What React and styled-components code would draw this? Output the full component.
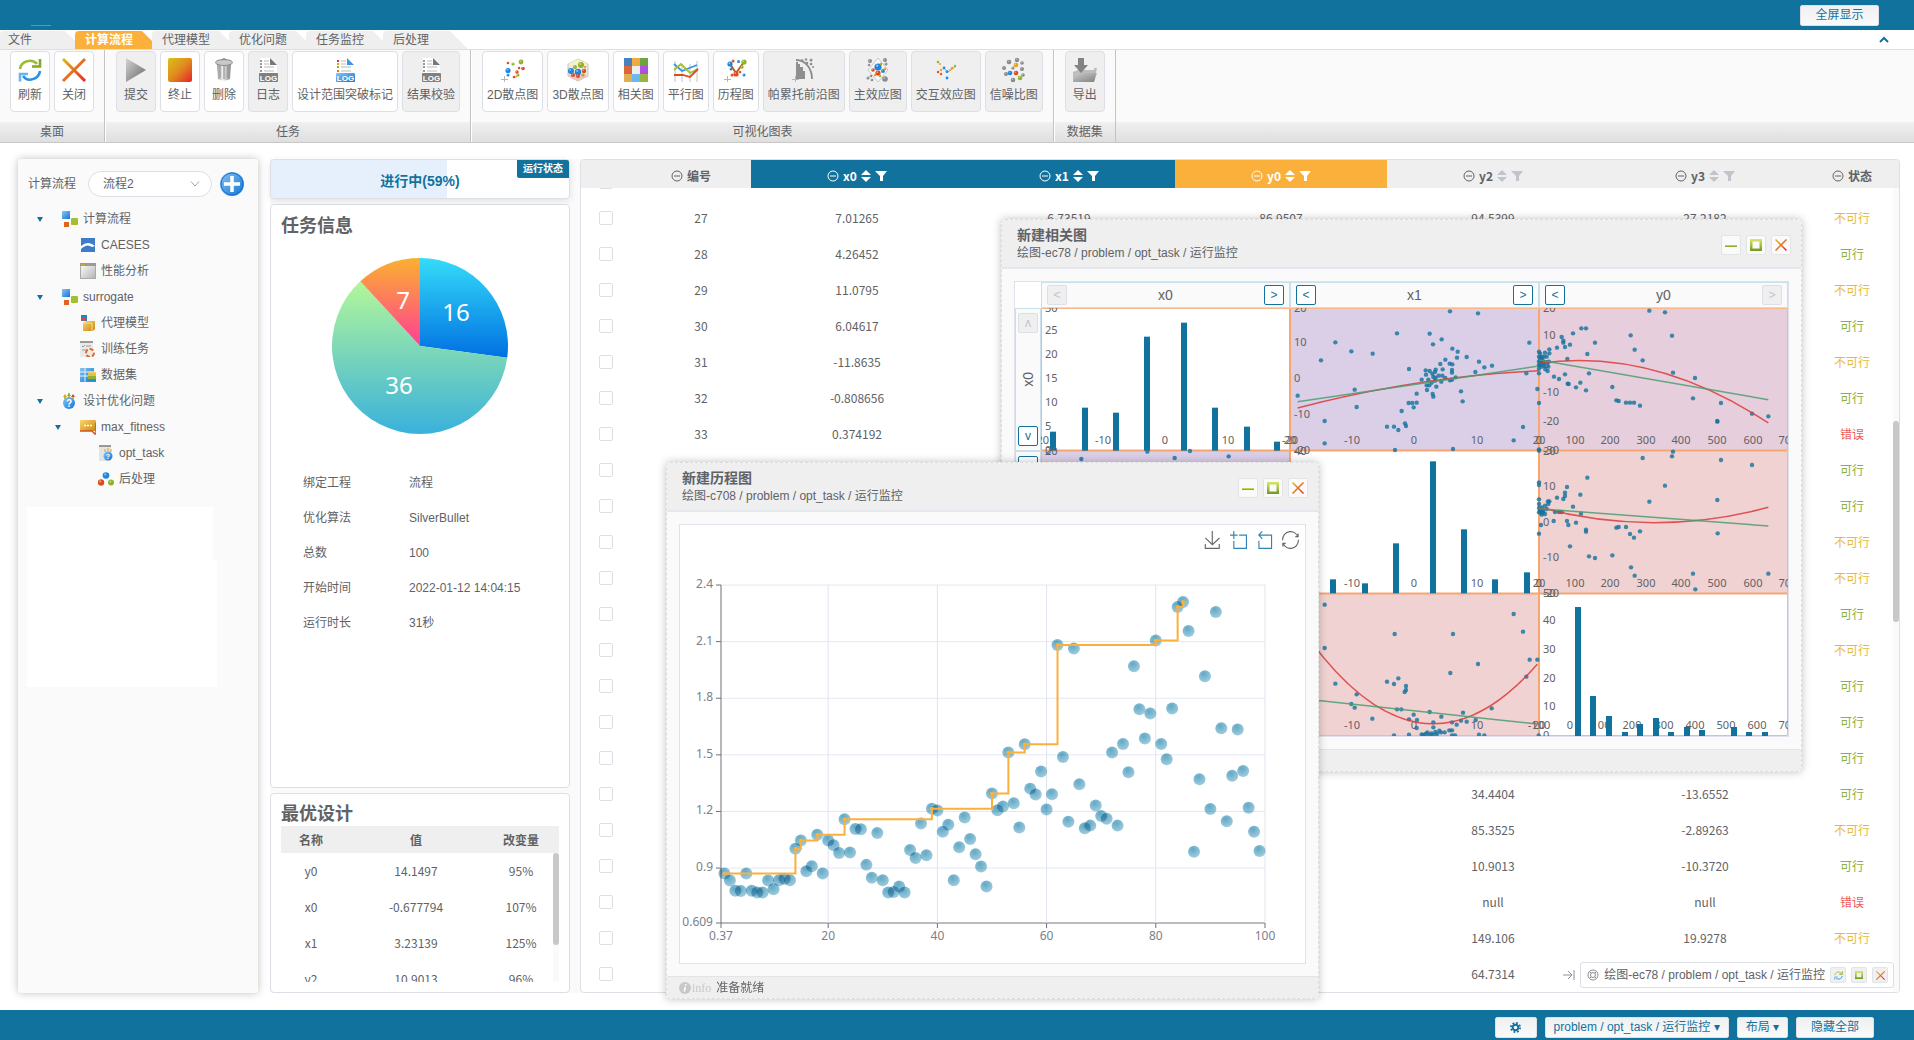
import React from "react";
import styled, { createGlobalStyle } from "styled-components";

const blue = "#12729e";
const orange = "#fbb03b";

const GlobalStyle = createGlobalStyle`
  * {
    box-sizing: border-box;
  }
  body {
    margin: 0;
    background: #fff;
    color: #606266;
    font-family: "Liberation Sans", "Noto Sans CJK SC", sans-serif;
    font-size: 12px;
    line-height: 18px;
  }
  button, select, input {
    font: inherit;
    color: inherit;
    margin: 0;
    padding: 0;
  }
  svg {
    display: block;
    flex: none;
  }
`;

/* ---------- page frame ---------- */

const Page = styled.div`
  height: 100vh;
  display: flex;
  flex-direction: column;
  position: relative;
  overflow: hidden;
`;

const TopBar = styled.header`
  flex: none;
  height: 30px;
  padding: 0 35px 0 31px;
  background: ${blue};
  display: flex;
  justify-content: space-between;
  align-items: center;
`;

const LogoMark = styled.div`
  width: 20px;
  height: 1px;
  align-self: flex-end;
  margin-bottom: 4px;
  background: #10b4dd;
`;

const BarButton = styled.button`
  height: 21px;
  min-width: ${(props) => props.$min || 42}px;
  padding: 0 8px;
  border: 1px solid #dcdfe6;
  border-radius: 2px;
  background: linear-gradient(#f0f0f0, #fafafa);
  color: ${blue};
  display: flex;
  align-items: center;
  justify-content: center;
  gap: 2px;
  white-space: nowrap;
`;

const BottomBar = styled.footer`
  flex: none;
  height: 30px;
  padding: 4px 40px 0 0;
  background: ${blue};
  display: flex;
  justify-content: flex-end;
  align-items: center;
  gap: 8px;
`;

/* ---------- ribbon ---------- */

const TabRow = styled.nav`
  flex: none;
  height: 20px;
  padding-top: 1px;
  border-bottom: 1px solid #dcdfe6;
  display: flex;
  justify-content: space-between;
`;

const TabList = styled.div`
  display: flex;
`;

const Tab = styled.button`
  width: 85px;
  margin-right: -8px;
  height: 18px;
  padding-left: 10px;
  border: 0;
  border-radius: 4px 0 0 0;
  text-align: left;
  line-height: 18px;
  background: ${(props) => (props.$active ? orange : "#efefef")};
  color: ${(props) => (props.$active ? "#fff" : "#606266")};
  font-weight: ${(props) => (props.$active ? "bold" : "normal")};
  clip-path: polygon(0 0, calc(100% - 18px) 0, 100% 100%, 0 100%);

  &:first-child {
    width: 83px;
    padding-left: 8px;
  }
`;

const FoldButton = styled.button`
  border: 0;
  background: none;
  margin-right: 24px;
`;

const Ribbon = styled.div`
  flex: none;
  display: flex;
  background: linear-gradient(#fafafa 72px, #f0f0f0 72px, #dfdfdf);
  border-bottom: 1px solid #c8c8c8;
`;

const RibbonGroup = styled.section`
  border-left: ${(props) => (props.$first ? 0 : "1px solid #fff")};
  border-right: 1px solid #c3c3c3;
`;

const RibbonButtons = styled.div`
  height: 72px;
  padding: 1px 10px 0;
  display: flex;
  gap: 4px;
`;

const RibbonButton = styled.button`
  height: 61px;
  min-width: 40px;
  padding: 6px 4px 0;
  border: 1px solid #dcdfe6;
  border-radius: 4px;
  background: ${(props) => (props.disabled ? "#efefef" : "#fff")};
  color: #606266;
  display: flex;
  flex-direction: column;
  align-items: center;
  gap: 4px;
  white-space: nowrap;
`;

const RibbonTitle = styled.div`
  height: 20px;
  line-height: 20px;
  text-align: center;
`;

/* ---------- main area ---------- */

const Main = styled.main`
  flex: 1;
  min-height: 0;
  padding: 16px 14px 17px 18px;
  display: flex;
  gap: 12px;
`;

const Side = styled.aside`
  width: 240px;
  flex: none;
  background: #fafafa;
  border-radius: 3px;
  box-shadow: 0 0 8px rgba(0, 0, 0, 0.25);
`;

const FlowPicker = styled.div`
  display: flex;
  align-items: center;
  padding: 12px 14px 0 10px;
`;

const SelectWrap = styled.div`
  position: relative;
  margin: 0 8px 0 12px;

  svg {
    position: absolute;
    right: 12px;
    top: 9px;
    pointer-events: none;
  }
`;

const Select = styled.select`
  appearance: none;
  width: 124px;
  height: 26px;
  padding: 0 14px;
  border: 1px solid #dcdfe6;
  border-radius: 13px;
  background: #fff;
`;

const PlainButton = styled.button`
  border: 0;
  background: none;
  cursor: pointer;
`;

const Tree = styled.ul`
  list-style: none;
  margin: 9px 0 15px;
  padding: 0;
`;

const TreeRow = styled.li`
  height: 26px;
  padding-left: ${(props) => 19 + props.$level * 18}px;
  display: flex;
  align-items: center;
`;

const Caret = styled.span`
  width: 25px;
  flex: none;

  &::before {
    content: "";
    display: ${(props) => (props.$open ? "block" : "none")};
    width: 0;
    border: 3px solid transparent;
    border-top: 5px solid ${blue};
    border-bottom: 0;
  }
`;

const TreeLabel = styled.span`
  margin-left: 5px;
`;

const BlankBlock = styled.div`
  width: ${(props) => props.$w}px;
  height: ${(props) => props.$h}px;
  margin-left: 9px;
  background: #fff;
`;

const Work = styled.div`
  flex: 1;
  min-width: 0;
  background: #fafafa;
  display: flex;
  gap: 10px;
`;

const Middle = styled.div`
  width: 300px;
  flex: none;
  display: flex;
  flex-direction: column;
  gap: 5px;
`;

const Card = styled.section`
  background: #fff;
  border: 1px solid #dcdfe6;
  border-radius: 4px;
`;

const Progress = styled(Card)`
  position: relative;
  height: 40px;
  padding-top: 4px;
  display: flex;
  align-items: center;
  justify-content: center;
  color: ${blue};
  font-size: 14px;
  font-weight: bold;
  background: linear-gradient(to right, #e6f0fc 59%, #fff 59%);
  box-shadow: 0 2px 6px rgba(0, 0, 0, 0.1);
`;

const Badge = styled.span`
  position: absolute;
  top: 0;
  right: 0;
  padding: 0 6px;
  border-radius: 0 2px 0 2px;
  background: ${blue};
  color: #fff;
  font-size: 10px;
`;

const InfoCard = styled(Card)`
  flex: 1;
  padding: 9px 10px;
`;

const CardTitle = styled.h2`
  margin: 0;
  font-size: 18px;
  line-height: 24px;
`;

const PieBox = styled.div`
  display: flex;
  justify-content: center;
  padding: 20px 0 32px;
`;

const InfoList = styled.dl`
  margin: 0;
  padding-left: 22px;
  display: grid;
  grid-template-columns: 106px 1fr;
  line-height: 35px;

  dd {
    margin: 0;
  }
`;

const BestCard = styled(Card)`
  height: 200px;
  padding: 8px 10px 10px;
  display: flex;
  flex-direction: column;
`;

const Scroller = styled.div`
  position: relative;
  flex: 1;
  min-height: 0;
  overflow: hidden;
`;

const Track = styled.div`
  position: absolute;
  right: 0;
  top: ${(props) => props.$top}px;
  bottom: 0;
  width: 6px;
  background: #fafafa;

  &::after {
    content: "";
    position: absolute;
    top: ${(props) => props.$from}%;
    height: ${(props) => props.$size}%;
    width: 6px;
    border-radius: 3px;
    background: #c8c8c8;
  }
`;

const Table = styled.table`
  width: 100%;
  table-layout: fixed;
  border-collapse: collapse;
  text-align: center;
  font-family: "Noto Sans CJK SC", sans-serif;

  td, th {
    padding: 0;
  }
  tbody tr {
    height: 36px;
  }
`;

const BestTable = styled(Table)`
  thead th {
    height: 27px;
    background: #efefef;
  }
  td:last-child, th:last-child {
    padding-right: 8px;
  }
`;

const DataCard = styled(Card)`
  flex: 1;
  min-width: 0;
  display: flex;
  overflow: hidden;
`;

const DataScroll = styled.div`
  flex: 1;
  overflow-x: hidden;
  overflow-y: scroll;
  scrollbar-width: none;
`;

const HeadCell = styled.th`
  position: sticky;
  top: 0;
  z-index: 1;
  height: 28px;
  background: ${(props) => props.$bg || "#efefef"};
  color: ${(props) => (props.$bg ? "#fff" : "#606266")};
`;

const HeadInner = styled.div`
  display: flex;
  align-items: center;
  justify-content: center;
  gap: 4px;
  padding-top: 4px;
  padding-right: ${(props) => props.$shift || 0}px;
`;

const CheckCell = styled.td`
  text-align: left;
`;

const Check = styled.input.attrs({ type: "checkbox" })`
  appearance: none;
  display: block;
  width: 14px;
  height: 14px;
  margin-left: 18px;
  border: 1px solid #dcdfe6;
  border-radius: 2px;
  background: #fff;
`;

const stateColors = { 可行: "#8cb043", 不可行: "#e6bb3c", 错误: "#ee5a5a" };

const StateCell = styled.td`
  color: ${(props) => stateColors[props.$state]};
  padding-right: 6px !important;
`;

/* ---------- floating windows ---------- */

const WindowBox = styled.section`
  position: absolute;
  left: ${(props) => props.$x}px;
  top: ${(props) => props.$y}px;
  z-index: ${(props) => props.$z};
  border: 1px dashed #dcdcdc;
  border-radius: 4px;
  background: #fafafa;
  box-shadow: 0 0 8px rgba(0, 0, 0, 0.25);
`;

const WindowHead = styled.header`
  padding: 6px 10px 5px 15px;
  background: #efefef;
  border-bottom: 2px solid #e4e7ed;
  display: flex;
  justify-content: space-between;
`;

const WindowTitle = styled.h3`
  margin: 0;
  font-size: 14px;
  line-height: 18px;
`;

const WindowTools = styled.div`
  display: flex;
  gap: 5px;
  padding-top: 9px;
`;

const ToolButton = styled.button`
  width: ${(props) => props.$size || 20}px;
  height: ${(props) => props.$size || 20}px;
  border: 1px solid #e2e4ea;
  border-radius: 2px;
  background: ${(props) => (props.$size ? "#f0f0f0" : "#fafafa")};
  display: flex;
  align-items: center;
  justify-content: center;
`;

const WindowBody = styled.div`
  margin: 12px;
  border: 1px solid #dfe2ea;
  background: #fff;
  position: relative;
`;

const WindowFoot = styled.footer`
  height: 22px;
  padding-left: 12px;
  border-top: 1px solid #e4e4e4;
  background: #efefef;
  display: flex;
  align-items: center;
`;

const InfoWord = styled.span`
  color: #c8c8c8;
  font-family: "Liberation Serif", serif;
  margin: 0 5px 0 1px;
`;

const Matrix = styled.div`
  display: grid;
  grid-template-columns: 26px 747px;
  grid-template-rows: 26px 428px;
`;

const MatrixHead = styled.div`
  grid-column: 2;
  display: flex;
`;

const MatrixSide = styled.div`
  display: flex;
  flex-direction: column;
`;

const AxisCell = styled.div`
  flex: 1;
  display: flex;
  flex-direction: ${(props) => (props.$vertical ? "column" : "row")};
  align-items: center;
  justify-content: space-between;
  padding: ${(props) => (props.$vertical ? "4px 0" : "0 5px")};
  border: 1px solid #c9e0ea;
  background: #fafafa;
  font-size: 14px;
`;

const AxisName = styled.span`
  writing-mode: ${(props) => (props.$vertical ? "vertical-rl" : "horizontal-tb")};
  rotate: ${(props) => (props.$vertical ? "180deg" : "0deg")};
`;

const StepButton = styled.button`
  width: 20px;
  height: 20px;
  border: 1px solid ${(props) => (props.disabled ? "#dcdfe6" : blue)};
  border-radius: 2px;
  background: ${(props) => (props.disabled ? "#efefef" : "#fff")};
  color: ${(props) => (props.disabled ? "#c0c4cc" : blue)};
  font-size: 12px;
  line-height: 18px;
`;

const ChartTools = styled.div`
  position: absolute;
  right: 6px;
  top: 6px;
  display: flex;
  gap: 9px;
`;

const Dock = styled.div`
  position: absolute;
  right: 20px;
  bottom: 52px;
  display: flex;
  align-items: center;
  gap: 5px;
`;

const DockItem = styled.div`
  height: 26px;
  padding: 0 5px 0 6px;
  border: 1px solid #dcdfe6;
  border-radius: 3px;
  background: #fff;
  display: flex;
  align-items: center;
  gap: 5px;
`;

/* ---------- icons ---------- */

// 공통 그라데이션 대신 아이콘 색상은 한 곳에서 정의
const Gradients = () => (
  <svg width="0" height="0" style={{ position: "absolute" }} aria-hidden="true">
    <defs>
      <linearGradient id="gFire" x1="0" y1="0" x2="1" y2="1">
        <stop offset="0" stopColor="#d9c21a" />
        <stop offset="0.5" stopColor="#e08a1e" />
        <stop offset="1" stopColor="#e8202c" />
      </linearGradient>
      <linearGradient id="gFireLine" gradientUnits="userSpaceOnUse" x1="0" y1="0" x2="24" y2="24">
        <stop offset="0" stopColor="#d9c21a" />
        <stop offset="0.5" stopColor="#e8701e" />
        <stop offset="1" stopColor="#e8202c" />
      </linearGradient>
      <linearGradient id="gGrey" x1="0" y1="0" x2="1" y2="1">
        <stop offset="0" stopColor="#d4d4d4" />
        <stop offset="1" stopColor="#666" />
      </linearGradient>
      <linearGradient id="gBlue" x1="0" y1="0" x2="1" y2="1">
        <stop offset="0" stopColor="#8cc4f0" />
        <stop offset="1" stopColor="#0a76dc" />
      </linearGradient>
      <linearGradient id="gGreen" x1="0" y1="0" x2="0" y2="1">
        <stop offset="0" stopColor="#dbe86a" />
        <stop offset="1" stopColor="#6f9820" />
      </linearGradient>
      <linearGradient id="gGold" x1="0" y1="0" x2="1" y2="1">
        <stop offset="0" stopColor="#fbd56a" />
        <stop offset="1" stopColor="#c98812" />
      </linearGradient>
      <linearGradient id="gPaper" x1="0" y1="0" x2="1" y2="1">
        <stop offset="0" stopColor="#fff" />
        <stop offset="1" stopColor="#b4b4b4" />
      </linearGradient>
      <linearGradient id="gSteel" x1="0" y1="0" x2="1" y2="0">
        <stop offset="0" stopColor="#999" />
        <stop offset="0.4" stopColor="#eee" />
        <stop offset="1" stopColor="#888" />
      </linearGradient>
      <radialGradient id="gBall" cx="0.4" cy="0.3" r="0.9">
        <stop offset="0" stopColor="#4f9fc0" />
        <stop offset="1" stopColor="#a9d0e0" />
      </radialGradient>
    </defs>
  </svg>
);

const ball = { b: "#1f86e0", r: "#dd4a20", g: "#8fb42c", o: "#e8a020", k: "#8a8a8a", c: "#45b6d8" };

// 점 목록 [x, y, r, color]
const Dots = ({ list }) =>
  list.map(([x, y, r, c], i) => (
    <g key={i}>
      <circle cx={x} cy={y} r={r} fill={ball[c]} />
      <circle cx={x - r / 4} cy={y - r / 3} r={r / 3} fill="#fff" opacity="0.45" />
    </g>
  ));

const Corner = () => <path d="M0 21.500H7M3.500 18V24" stroke="#b5b5b5" fill="none" />;

const RefreshArt = () => (
  <g fill="none" strokeWidth="2.600">
    <path d="M2 11C3 3 14 0 19 6" stroke="#9cbc34" />
    <path d="M14 8.500H22V1" stroke="#86a822" />
    <path d="M22 13C21 21 10 25 5 18" stroke="#2a92e4" />
    <path d="M10 16H2V23.500" stroke="#6cb4ec" />
  </g>
);
const CrossArt = () => <path d="M1 1L23 23M23 1L1 23" stroke="url(#gFireLine)" strokeWidth="3" fill="none" />;

const LogArt = ({ color }) => (
  <g>
    <path d="M4 0H15L21 6V17H4Z" fill="#fff" />
    <path d="M14 0L21 7H14Z" fill={color ? "#3d97e2" : "#777"} />
    {[3, 6, 9, 13].map((y, i) => (
      <g key={y}>
        <path d={`M4 ${y}h2`} stroke={color ? ["#d33", "#e8a020", "#8fb42c", "#e8701e"][i] : "#999"} strokeWidth="2" />
        <path d={`M8 ${y}h${i < 2 ? 5 : 10}`} stroke="#b9b9b9" />
      </g>
    ))}
    <rect x="3" y="15" width="19" height="9" rx="1" fill={color ? "url(#gBlue)" : "#808080"} />
    <text x="12.500" y="22.500" fontSize="8" fontWeight="bold" fill="#fff" textAnchor="middle">LOG</text>
  </g>
);

const ribbonArt = {
  refresh: <RefreshArt />,
  close: <CrossArt />,
  play: <path d="M2 0L22 12L2 24Z" fill="url(#gGrey)" />,
  stop: <rect x="0" y="0" width="24" height="24" rx="2" fill="url(#gFire)" />,
  trash: (
    <g>
      <path d="M5 6L6 21Q12 24 18 21L19 6Z" fill="url(#gSteel)" />
      <path d="M8 8V20M12 8V21M16 8V20" stroke="#8d8d8d" />
      <ellipse cx="12" cy="4.500" rx="8.500" ry="3" fill="#c9c9c9" stroke="#8a8a8a" />
      <path d="M9 2Q12 -1 15 2" stroke="#8a8a8a" fill="none" />
    </g>
  ),
  log: <LogArt />,
  logColor: <LogArt color />,
  scatter2d: (
    <g>
      <Corner />
      <Dots list={[[7, 12.500, 2.600, "b"], [7, 17, 1.500, "b"], [7, 5, 1.300, "r"], [12, 6, 1.600, "g"], [20, 4, 2.400, "g"], [16, 14, 1.700, "r"], [22, 10.500, 1.800, "r"], [18, 10, 1.300, "r"], [13, 19, 1.300, "r"], [17, 17, 1.500, "g"], [15, 18.500, 1, "o"]]} />
    </g>
  ),
  scatter3d: (
    <g>
      <path d="M12 1L22 6V18L12 23L2 18V6Z" fill="#eceadb" stroke="#c4c4bc" />
      <path d="M2 6L12 11L22 6L12 1Z" fill="#f7efc8" />
      <path d="M2 18L12 13L22 18L12 23Z" fill="#f2c4bc" />
      <Dots list={[[5, 13, 3, "b"], [12, 14, 3.200, "b"], [15, 7, 3, "g"], [9, 9, 2, "g"], [7, 17, 2, "r"], [12, 18, 2, "r"], [18, 13, 2.200, "r"], [19, 9, 1.200, "o"], [17, 17, 1.600, "g"]]} />
    </g>
  ),
  matrix: (
    <g>
      {["#2a6db8", "#f0a020", "#5a9a24", "#d8501c", "#f2f2f2", "#a93ce0", "#e0a63c", "#5ab4f0", "#93b428"].map((c, i) => (
        <rect key={i} x={(i % 3) * 8} y={Math.floor(i / 3) * 8} width="8" height="8" fill={c} />
      ))}
      <path d="M0 0H24V24H0Z" fill="url(#gPaper)" opacity="0.150" />
    </g>
  ),
  parallel: (
    <g fill="none">
      <path d="M1 3V24M8 6V24M16 6V24M23 3V24" stroke="#c4c4c4" />
      <path d="M0 6L8 13L23 7" stroke="#3494e4" strokeWidth="1.800" />
      <path d="M0 12L7 6L16 15L24 11" stroke="#a3bf30" strokeWidth="1.800" />
      <path d="M0 17H9L16 19L24 11" stroke="#dd4a20" strokeWidth="1.800" />
    </g>
  ),
  history: (
    <g>
      <Corner />
      <path d="M6 6L12 15L20 4" stroke="#c25c18" strokeWidth="2" fill="none" />
      <Dots list={[[6, 6, 2.600, "b"], [20, 4, 2.600, "g"], [9, 3, 1.500, "r"], [14.500, 3.500, 1.500, "b"], [12, 16, 2.600, "r"], [7, 11, 1.500, "b"], [18, 9, 1.700, "g"], [20, 17, 1.500, "b"], [8, 17, 1.500, "r"], [16, 14, 1.300, "r"]]} />
    </g>
  ),
  pareto: (
    <g>
      <Corner />
      <path d="M4 21V4H6V6H8V9H11V13H13V21Z" fill="#8e8e8e" />
      <path d="M4 2C14 2 20 11 20 21" stroke="#8a8a8a" strokeWidth="1.800" fill="none" />
      <Dots list={[[10, 2.500, 1.300, "k"], [14, 1.500, 1.200, "k"], [19, 2, 1.500, "k"], [15, 5, 1.300, "k"], [19, 6, 1.300, "k"], [21, 9, 1, "k"]]} />
    </g>
  ),
  mainEffect: (
    <g>
      <path d="M12 0L22 12L12 24L2 12Z" fill="#f7f7f7" stroke="#c8c8c8" />
      <Dots list={[[4, 3, 2, "k"], [19, 2, 2, "k"], [3, 7, 1.200, "k"], [20, 6, 1.500, "k"], [2, 20, 1.500, "k"], [6, 22, 1.300, "k"], [5, 18, 1.300, "k"], [19, 21, 2.800, "k"], [12, 9, 3.600, "b"], [12, 15, 2.600, "r"], [7, 12, 1.800, "r"], [17, 13, 2, "b"], [15, 6, 1.300, "g"], [9, 17, 1.200, "o"], [14, 18, 1.200, "g"], [19, 11, 1.400, "o"]]} />
    </g>
  ),
  cross: (
    <g>
      <path d="M11 11L14 14L21 9" stroke="#aaa" fill="none" />
      <Dots list={[[4, 4, 1.300, "g"], [6, 6, 1, "o"], [4, 14, 1.200, "r"], [7, 16, 1.200, "r"], [7, 12, 1.200, "o"], [10, 10, 1.400, "b"], [13, 13.500, 1.500, "b"], [18, 10, 1.300, "o"], [21, 8, 1.200, "g"], [13, 20, 1.400, "b"], [16, 12, 1, "o"]]} />
    </g>
  ),
  noise: (
    <Dots list={[[7, 4, 2.300, "k"], [15, 2, 2.200, "k"], [2, 10, 2, "k"], [14, 7, 2.300, "o"], [20, 5, 1.800, "k"], [20, 11, 2, "k"], [4, 16, 2, "k"], [8, 15, 2.300, "b"], [14, 15, 2.300, "r"], [11, 10, 1.600, "k"], [21, 17, 1.800, "k"], [11, 22, 2.300, "k"], [18, 20, 2.300, "g"]]} />
  ),
  exportFile: (
    <g>
      <path d="M5 12H21V10H24L21 24H0V14Z" fill="#bcbcbc" />
      <path d="M2 15H24L21 24H0Z" fill="url(#gGrey)" opacity="0.700" />
      <path d="M5 0H11V7H15L8 15L1 7H5Z" fill="#838383" />
    </g>
  ),
};

const Art = ({ name }) => (
  <svg width="24" height="24" viewBox="0 0 24 24" overflow="visible" aria-hidden="true">
    {ribbonArt[name]}
  </svg>
);

const treeArt = {
  flow: (
    <g>
      <rect x="0" y="0" width="8" height="8" fill="url(#gBlue)" />
      <rect x="9" y="7" width="7" height="7" rx="1" fill="#a3bf30" />
      <rect x="2" y="11" width="5" height="5" fill="#e0661e" />
    </g>
  ),
  caeses: (
    <g>
      <rect x="1" y="1" width="14" height="14" fill="#3f7cc8" />
      <path d="M1 9Q8 3 15 9L12 10Q7 6 1 12Z" fill="#fff" />
    </g>
  ),
  panel: (
    <g>
      <rect x="0.500" y="0.500" width="15" height="15" fill="url(#gPaper)" stroke="#aaa" />
      <rect x="0" y="0" width="16" height="3" fill="#9a9a9a" />
      <path d="M1 1.500h4" stroke="#e8a020" />
    </g>
  ),
  model: (
    <g>
      <rect x="1" y="0" width="6" height="6" fill="#2b7fd0" />
      <circle cx="4" cy="4" r="2" fill="#dd4a20" />
      <path d="M3 8L6 6H15V14L13 16H3Z" fill="url(#gGold)" />
      <path d="M3 8H12V16" stroke="#f8dc92" fill="none" />
    </g>
  ),
  train: (
    <g>
      <rect x="0" y="0" width="13" height="16" fill="#e9e9e9" />
      <rect x="0" y="0" width="13" height="2" fill="#999" />
      <path d="M2 5L3 6L5 4M6 5H11M2 9H7" stroke="#999" fill="none" />
      <circle cx="10" cy="12" r="4" fill="none" stroke="#de6a30" strokeWidth="2" strokeDasharray="4 2" />
    </g>
  ),
  data: (
    <g>
      <path d="M0 1H14V15H0Z" fill="url(#gBlue)" />
      <path d="M0 5H14M0 9H9M5 1V15" stroke="#e4f1fb" />
      <ellipse cx="12" cy="6" rx="4" ry="2" fill="#f8d060" />
      <rect x="8" y="6" width="8" height="4" fill="#e2c344" />
      <rect x="8" y="9" width="8" height="3" fill="#8fb42c" />
      <rect x="8" y="12" width="8" height="3" fill="#2f8be0" />
    </g>
  ),
  problem: (
    <g>
      <circle cx="7" cy="10" r="6" fill="url(#gBlue)" />
      <text x="7" y="14" fontSize="10" fontWeight="bold" textAnchor="middle" fill="#fff">?</text>
      <path d="M3 6V2M7 5V0M11 6V2" stroke="#8fb42c" strokeWidth="1.500" />
      <path d="M1 4L3 1L5 4Z" fill="#e8a020" />
      <path d="M5 3L7 0L9 3Z" fill="#8fb42c" />
      <path d="M9 4L11 1L13 4Z" fill="#dd4a20" />
    </g>
  ),
  board: (
    <g>
      <rect x="0" y="1" width="16" height="11" rx="1" fill="url(#gGold)" />
      <path d="M0 12H12L15 15H16V4" stroke="#d8501c" strokeWidth="1.500" fill="none" />
      <path d="M4 6.500h2M7 6.500h2M10 6.500h2" stroke="#fff" strokeWidth="1.500" />
    </g>
  ),
  task: (
    <g>
      <rect x="1" y="0" width="12" height="16" fill="#e4e4e4" />
      <rect x="1" y="0" width="12" height="2" fill="#999" />
      <circle cx="10" cy="11" r="4.500" fill="url(#gBlue)" />
      <text x="10" y="14" fontSize="7" fontWeight="bold" textAnchor="middle" fill="#fff">?</text>
      <path d="M7 7V4M10 6V3M13 7V4" stroke="#e8a020" />
    </g>
  ),
  post: <Dots list={[[8, 4.500, 3.300, "b"], [3, 11.500, 3.200, "r"], [13, 11.500, 3, "g"]]} />,
};

const TreeArt = ({ name }) => (
  <svg width="16" height="16" viewBox="0 0 16 16" aria-hidden="true">
    {treeArt[name]}
  </svg>
);

const MinusArt = () => (
  <svg width="12" height="12" viewBox="0 0 12 12">
    <rect x="0" y="6" width="12" height="2" fill="url(#gGreen)" />
  </svg>
);
const SquareArt = ({ size = 12 }) => (
  <svg width={size} height={size} viewBox="0 0 12 12">
    <path d="M0 0H12V12H0ZM2.500 2.500V9.500H9.500V2.500Z" fillRule="evenodd" fill="url(#gGreen)" />
  </svg>
);
const XArt = ({ size = 12 }) => (
  <svg width={size} height={size} viewBox="0 0 24 24">
    <CrossArt />
  </svg>
);

const CircleMinus = () => (
  <svg width="12" height="12" viewBox="0 0 12 12" fill="none" stroke="currentColor">
    <circle cx="6" cy="6" r="5" />
    <path d="M3 6H9" />
  </svg>
);
const SortArt = ({ fill }) => (
  <svg width="10" height="12" viewBox="0 0 10 12" fill={fill}>
    <path d="M0 5L5 0L10 5Z" />
    <path d="M0 7L5 12L10 7Z" />
  </svg>
);
const FilterArt = ({ fill }) => (
  <svg width="12" height="12" viewBox="0 0 12 12" fill={fill}>
    <path d="M0 1H12L8 6V11H5V6Z" />
  </svg>
);

/* ---------- data ---------- */

const tabs = ["文件", "计算流程", "代理模型", "优化问题", "任务监控", "后处理"];

const ribbon = [
  { title: "桌面", items: [["refresh", "刷新"], ["close", "关闭"]] },
  {
    title: "任务",
    items: [["play", "提交", true], ["stop", "终止"], ["trash", "删除"], ["log", "日志", true], ["logColor", "设计范围突破标记"], ["log", "结果校验", true]],
  },
  {
    title: "可视化图表",
    items: [
      ["scatter2d", "2D散点图"], ["scatter3d", "3D散点图"], ["matrix", "相关图"], ["parallel", "平行图"], ["history", "历程图"],
      ["pareto", "帕累托前沿图", true], ["mainEffect", "主效应图", true], ["cross", "交互效应图", true], ["noise", "信噪比图", true],
    ],
  },
  { title: "数据集", items: [["exportFile", "导出", true]] },
];

const tree = [
  [0, "flow", "计算流程", true],
  [1, "caeses", "CAESES"],
  [1, "panel", "性能分析"],
  [0, "flow", "surrogate", true],
  [1, "model", "代理模型"],
  [1, "train", "训练任务"],
  [1, "data", "数据集"],
  [0, "problem", "设计优化问题", true],
  [1, "board", "max_fitness", true],
  [2, "task", "opt_task"],
  [2, "post", "后处理"],
];

const info = [
  ["绑定工程", "流程"],
  ["优化算法", "SilverBullet"],
  ["总数", "100"],
  ["开始时间", "2022-01-12 14:04:15"],
  ["运行时长", "31秒"],
];

const best = [
  ["y0", "14.1497", "95%"],
  ["x0", "-0.677794", "107%"],
  ["x1", "3.23139", "125%"],
  ["y2", "10.9013", "96%"],
];

const rows = [
  [26, [], "可行"],
  [27, ["7.01265", "6.73519", "86.9507", "94.5399", "27.2182"], "不可行"],
  [28, ["4.26452"], "可行"],
  [29, ["11.0795"], "不可行"],
  [30, ["6.04617"], "可行"],
  [31, ["-11.8635"], "不可行"],
  [32, ["-0.808656"], "可行"],
  [33, ["0.374192"], "错误"],
  [34, [], "可行"],
  [35, [], "可行"],
  [36, [], "不可行"],
  [37, [], "不可行"],
  [38, [], "可行"],
  [39, [], "不可行"],
  [40, [], "可行"],
  [41, [], "可行"],
  [42, [], "可行"],
  [43, ["", "", "", "34.4404", "-13.6552"], "可行"],
  [44, ["", "", "", "85.3525", "-2.89263"], "不可行"],
  [45, ["", "", "", "10.9013", "-10.3720"], "可行"],
  [46, ["", "", "", "null", "null"], "错误"],
  [47, ["", "", "", "149.106", "19.9278"], "不可行"],
  [48, ["", "", "", "64.7314", ""], "可行"],
  [49, [], "可行"],
];

const columns = [
  ["x0", blue],
  ["x1", blue],
  ["y0", orange],
  ["y2"],
  ["y3"],
];

// 1번 설계부터 99번까지의 목적함수 값
const history = [
  0.871, 0.834, 0.78, 0.779, 0.871, 0.78, 0.77, 0.77, 0.834, 0.788, 0.835, 0.844, 0.835, 1.003, 1.046, 0.883, 0.91, 1.077, 0.871, 1.046,
  1.021, 0.98, 1.159, 0.982, 1.107, 1.106, 0.917, 0.849, 1.086, 0.835, 0.77, 0.773, 0.802, 0.77, 0.996, 0.954, 1.136, 0.968, 1.214, 1.205,
  1.093, 1.129, 0.835, 1.01, 1.168, 1.054, 0.973, 0.908, 0.802, 1.295, 1.206, 1.226, 1.512, 1.244, 1.115, 1.556, 1.321, 1.29, 1.412, 1.21,
  1.291, 2.082, 1.489, 1.146, 2.064, 1.344, 1.111, 1.125, 1.231, 1.176, 1.161, 1.512, 1.125, 1.558, 1.408, 1.969, 1.741, 1.587, 1.719, 2.106,
  1.558, 1.477, 1.746, 2.283, 2.31, 2.156, 0.987, 1.371, 1.916, 1.213, 2.257, 1.641, 1.148, 1.389, 1.634, 1.415, 1.22, 1.093, 0.991,
];

// 산점도 좌표는 셀 크기를 747 x 428 로 봤을 때의 값
const CELL_W = 249;
const CELL_H = 428 / 3;

const cells = [
  {
    col: 0, row: 0,
    xs: [["-20", 0], ["-10", 62], ["0", 124], ["10", 187], ["20", 249]],
    ys: [["30", 0], ["25", 22], ["20", 46], ["15", 70], ["10", 94], ["5", 118], ["0", 142]],
    bars: [[12, 19], [44, 43], [75, 38], [106, 114], [143, 128], [174, 43], [206, 24], [236, 9]],
  },
  {
    col: 1, row: 0, fill: "#dbcfe7",
    xs: [["-20", 0], ["-10", 62], ["0", 124], ["10", 187], ["20", 249]],
    ys: [["20", 0], ["10", 34], ["0", 70], ["-10", 106], ["-20", 142]],
    green: "M23 281L747 174", red: "M23 300Q385 206 747 188",
    points: [
      [136, 103], [93, 157], [184, 130], [248, 137], [321, 76], [419, 77], [480, 10], [455, 94], [429, 109], [487, 122], [503, 131], [501, 149],
      [466, 155], [530, 147], [357, 183], [407, 187], [437, 185], [458, 184], [451, 168], [479, 167], [487, 169], [486, 186], [486, 194], [408, 200],
      [419, 189], [427, 197], [435, 192], [395, 215], [415, 215], [430, 207], [437, 209], [446, 203], [457, 203], [466, 210], [454, 221], [435, 218],
      [425, 224], [410, 232], [418, 232], [439, 236], [411, 246], [380, 257], [428, 258], [430, 266], [480, 217], [486, 215], [497, 208], [513, 250],
      [518, 280], [356, 285], [367, 285], [380, 284], [371, 298], [335, 309], [291, 356], [312, 356], [325, 366], [345, 346], [348, 354], [23, 263],
      [194, 245], [200, 297], [104, 339], [104, 406], [315, 426], [489, 423], [564, 16], [718, 104], [567, 161], [583, 178], [606, 173], [556, 192],
      [709, 196], [742, 243], [699, 357], [671, 397],
    ],
  },
  {
    col: 2, row: 0, fill: "#e6cedc",
    xs: [["0", 0], ["100", 36], ["200", 71], ["300", 107], ["400", 142], ["500", 178], ["600", 214], ["700", 249]],
    ys: [["20", 0], ["10", 27], ["0", 56], ["-10", 84], ["-20", 113], ["-30", 142]],
    green: "M0 156L688 275", red: "M0 166Q344 118 688 345",
    points: [
      [331, 8], [378, 13], [399, 83], [275, 82], [287, 125], [311, 157], [141, 61], [127, 61], [102, 76], [68, 87], [73, 98], [73, 104], [93, 110],
      [78, 117], [54, 119], [168, 104], [145, 138], [85, 153], [78, 199], [150, 196], [45, 206], [60, 213], [86, 227], [89, 228], [124, 224],
      [111, 238], [141, 247], [220, 237], [232, 277], [239, 279], [261, 284], [273, 284], [285, 284], [303, 293], [402, 194], [468, 210], [462, 271],
      [546, 285], [535, 339], [535, 341], [639, 317], [688, 325], [31, 124], [31, 136], [18, 134], [8, 146], [3, 136], [0, 131], [15, 146], [23, 146],
      [3, 156], [13, 161], [23, 166], [28, 176], [26, 189], [19, 184], [8, 176], [3, 171], [30, 161], [0, 196], [0, 285], [0, 424], [11, 166],
      [16, 174], [0, 146], [5, 150], [6, 162], [10, 155], [0, 160], [0, 170], [0, 182],
    ],
  },
  {
    col: 0, row: 1, fill: "#dbcfe7",
    xs: [["-20", 0], ["-10", 62], ["0", 124], ["10", 187], ["20", 249]],
    ys: [["20", 0], ["10", 36], ["0", 71], ["-10", 106], ["-20", 142]],
    points: [[319, 3], [447, 1], [401, 22], [563, 17], [121, 25]],
  },
  {
    col: 1, row: 1,
    xs: [["-20", 0], ["-10", 62], ["0", 124], ["10", 187], ["20", 249]],
    ys: [["40", 0], ["30", 36], ["20", 71], ["10", 106], ["0", 142]],
    bars: [[12, 18], [43, 14], [75, 10], [106, 50], [143, 132], [174, 64], [205, 14], [237, 21]],
  },
  {
    col: 2, row: 1, fill: "#f0d2d2",
    xs: [["0", 0], ["100", 36], ["200", 71], ["300", 107], ["400", 142], ["500", 178], ["600", 214], ["700", 249]],
    ys: [["20", 0], ["10", 35], ["0", 71], ["-10", 106], ["-20", 142]],
    green: "M0 174L688 226", red: "M0 170Q344 262 688 170",
    points: [
      [0, 0], [402, 3], [399, 17], [311, 22], [546, 28], [639, 43], [145, 81], [378, 105], [0, 95], [0, 103], [84, 109], [124, 132], [78, 126],
      [78, 136], [54, 141], [73, 145], [0, 146], [31, 152], [102, 168], [331, 153], [535, 148], [18, 165], [28, 160], [8, 170], [3, 180], [13, 180],
      [23, 175], [18, 190], [8, 192], [0, 185], [0, 160], [48, 184], [60, 184], [68, 184], [126, 189], [44, 211], [84, 211], [88, 223], [111, 216],
      [6, 223], [141, 237], [141, 243], [232, 231], [239, 229], [261, 229], [273, 250], [285, 261], [303, 242], [536, 248], [0, 249], [93, 287],
      [150, 317], [168, 322], [220, 314], [276, 350], [287, 375], [462, 369], [688, 369], [469, 416], [5, 186], [12, 186], [0, 172], [27, 152], [9, 178],
    ],
  },
  {
    col: 1, row: 2, fill: "#f0d2d2",
    xs: [["-20", 0], ["-10", 62], ["0", 124], ["10", 187], ["20", 249]],
    ys: [["600", 0], ["400", 47], ["200", 95]],
    green: "M23 315L742 392", red: "M23 88Q382 624 742 213",
    points: [
      [104, 34], [671, 62], [314, 122], [489, 122], [699, 115], [104, 164], [719, 199], [742, 199], [564, 212], [481, 239], [709, 250], [325, 255],
      [291, 265], [312, 272], [348, 278], [348, 290], [344, 296], [136, 271], [200, 303], [184, 332], [194, 343], [321, 348], [334, 348], [605, 345],
      [247, 376], [419, 356], [454, 370], [519, 358], [371, 364], [357, 378], [381, 380], [557, 380], [530, 385], [486, 387], [500, 394], [430, 387],
      [380, 404], [430, 402], [513, 382], [312, 426], [357, 424], [395, 423], [407, 422], [412, 417], [424, 420], [436, 416], [441, 422], [453, 417],
      [464, 417], [478, 411], [486, 411], [486, 426], [495, 426], [567, 424], [583, 426], [746, 426], [400, 425], [418, 425], [430, 424], [448, 412],
    ],
  },
  {
    col: 2, row: 2,
    xs: [["-100", 0], ["0", 31], ["100", 62], ["200", 93], ["300", 125], ["400", 156], ["500", 187], ["600", 218], ["700", 249]],
    ys: [["50", 0], ["40", 27], ["30", 56], ["20", 85], ["10", 113], ["0", 142]],
    bars: [[39, 129], [54, 40], [70, 20], [86, 4], [101, 12], [117, 18], [132, 4], [148, 9], [163, 6], [195, 9], [210, 4], [226, 4]],
  },
];

/* ---------- charts ---------- */

const slices = [
  { value: 16, top: "#35dcf9", bottom: "#0070e2", x: 124, y: 63 },
  { value: 36, top: "#b3f79a", bottom: "#3ab1dc", x: 67, y: 136 },
  { value: 7, top: "#fbb030", bottom: "#ff3f94", x: 71, y: 51 },
];

const Pie = () => {
  let start = 0;
  const spot = (v) => {
    const a = (v / 59) * Math.PI * 2;
    return `${88 + 88 * Math.sin(a)} ${88 - 88 * Math.cos(a)}`;
  };
  return (
    <svg width="176" height="176" viewBox="0 0 176 176" fontFamily="Noto Sans, sans-serif" fontSize="24" fill="#fff">
      {slices.map((s, i) => {
        const from = start;
        start += s.value;
        return (
          <g key={i}>
            <linearGradient id={"pie" + i} x1="0" y1="0" x2="0" y2="1">
              <stop offset="0" stopColor={s.top} />
              <stop offset="1" stopColor={s.bottom} />
            </linearGradient>
            <path d={`M88 88L${spot(from)}A88 88 0 ${s.value > 29.5 ? 1 : 0} 1 ${spot(start)}Z`} fill={`url(#pie${i})`} />
          </g>
        );
      })}
      {slices.map((s) => (
        <text key={s.value} x={s.x} y={s.y} textAnchor="middle">{s.value}</text>
      ))}
    </svg>
  );
};

const HistoryChart = () => {
  const px = (n) => 41 + ((n - 0.37) / 99.63) * 544;
  const py = (v) => 60 + ((2.4 - v) / 1.791) * 338;

  // 지금까지의 최대값이 갱신될 때마다 계단이 올라간다
  const steps = [];
  history.forEach((v, i) => {
    if (steps.length === 0 || v > steps[steps.length - 1][1] + 0.001) {
      steps.push([i + 1, v]);
    }
  });
  const line = steps.map(([n, v], i) => (i === 0 ? `M${px(n)} ${py(v)}` : `H${px(n)}V${py(v)}`)).join("");

  return (
    <svg width="625" height="438" viewBox="0 0 625 438" fontFamily="Noto Sans, sans-serif" fontSize="12" fill="#7d808a">
      {[2.4, 2.1, 1.8, 1.5, 1.2, 0.9, 0.609].map((v) => (
        <g key={v}>
          <path d={`M41 ${py(v)}H585`} stroke={v === 0.609 ? "#a3a5ad" : "#e4e8f3"} strokeWidth={v === 0.609 ? 1.5 : 1} />
          <path d={`M36 ${py(v)}H41`} stroke="#6e7079" />
          <text x="33" y={py(v) + 3} textAnchor="end">{v}</text>
        </g>
      ))}
      {[0.37, 20, 40, 60, 80, 100].map((n) => (
        <g key={n}>
          <path d={`M${px(n)} 60V398`} stroke={n === 0.37 ? "#6e7079" : "#e0e4f0"} />
          <path d={`M${px(n)} 398V403`} stroke="#6e7079" />
          <text x={px(n)} y="415" textAnchor="middle">{n}</text>
        </g>
      ))}
      {history.map((v, i) => (
        <circle key={i} cx={px(i + 1)} cy={py(v)} r="6" fill="url(#gBall)" opacity="0.9" style={{ mixBlendMode: "multiply" }} />
      ))}
      <path d={line} fill="none" stroke={orange} strokeWidth="2" />
      {steps.map(([n, v]) => (
        <circle key={n} cx={px(n)} cy={py(v)} r="2" fill={orange} />
      ))}
    </svg>
  );
};

const PlotCell = ({ cell }) => (
  <g transform={`translate(${cell.col * CELL_W} ${cell.row * CELL_H})`}>
    {cell.ys.map(([t, y]) => (
      <text key={t} x="4" y={y + 4}>{t}</text>
    ))}
    {cell.xs.map(([t, x]) => (
      <text key={t} x={x} y="136" textAnchor="middle">{t}</text>
    ))}
    {(cell.bars || []).map(([x, h]) => (
      <rect key={x} x={x - 3} y={CELL_H - h} width="6" height={h} fill={blue} />
    ))}
    {(cell.points || []).map(([x, y], i) => (
      <circle key={i} cx={x / 3} cy={y / 3} r="2.2" fill={blue} opacity="0.8" />
    ))}
    <g transform="scale(0.33333)" fill="none" strokeWidth="4.500">
      <path d={cell.red} stroke="#dc3a3a" opacity="0.850" />
      <path d={cell.green} stroke="#4a9f70" opacity="0.850" />
    </g>
  </g>
);

const MatrixPlot = () => (
  <svg width="747" height="428" viewBox="0 0 747 428" fontFamily="Noto Sans, sans-serif" fontSize="11" fill="#606266">
    {cells.map((c, i) => (
      <rect key={i} x={c.col * CELL_W} y={c.row * CELL_H} width={CELL_W} height={CELL_H} fill={c.fill || "#fff"} />
    ))}
    <path d="M249 0V428M498 0V428M0 142.500H747M0 285.500H747" stroke="#f7a672" strokeWidth="2" />
    <path d="M0.500 0.500H746.500V427.500H0.500Z" fill="none" stroke="#f8b88e" />
    {cells.map((c, i) => (
      <PlotCell key={i} cell={c} />
    ))}
  </svg>
);

const chartTools = [
  ["保存", "M4.7,22.9L29.3,45.5L54.7,23.4M4.6,43.6L4.6,58L53.8,58L53.8,43.6M29.2,45.1L29.2,0", "#666"],
  ["区域缩放", "M0,13.5h26.9 M13.5,26.9V0 M32.1,13.5H58V58H13.5 V32.1", "#2f86b0"],
  ["缩放还原", "M22,1.4L9.9,13.5l12.3,12.3 M10.3,13.5H54.9v44.6 H10.3v-26", "#2f86b0"],
  ["还原", "M47,18.9h9.8V8.7 M56.3,20.1 C52.1,9,40.5,0.6,26.8,2.1C12.6,3.7,1.6,16.2,2.1,30.6 M13,41.1H3.1v10.2 M3.7,39.9c4.2,11.1,15.8,19.5,29.5,18 c14.2-1.6,25.2-14.1,24.7-28.5", "#666"],
];

/* ---------- parts ---------- */

const FloatWindow = ({ x, y, z, title, path, footer, children }) => (
  <WindowBox $x={x} $y={y} $z={z}>
    <WindowHead>
      <div>
        <WindowTitle>{title}</WindowTitle>
        <div>{path}</div>
      </div>
      <WindowTools>
        <ToolButton aria-label="最小化"><MinusArt /></ToolButton>
        <ToolButton aria-label="最大化"><SquareArt /></ToolButton>
        <ToolButton aria-label="关闭"><XArt /></ToolButton>
      </WindowTools>
    </WindowHead>
    <WindowBody>{children}</WindowBody>
    <WindowFoot>{footer}</WindowFoot>
  </WindowBox>
);

const DataTable = () => {
  const scroll = React.useRef(null);

  // 26번 행이 반쯤 가려진 위치에서 시작
  React.useLayoutEffect(() => {
    scroll.current.scrollTop = 24;
  }, []);

  return (
    <DataCard>
      <Scroller>
        <DataScroll ref={scroll} style={{ height: "100%" }}>
          <Table>
            <colgroup>
              <col width="70" />
              <col width="100" />
              <col /><col /><col /><col /><col />
              <col width="88" />
            </colgroup>
            <thead>
              <tr>
                <HeadCell />
                <HeadCell><HeadInner $shift={20}><CircleMinus />编号</HeadInner></HeadCell>
                {columns.map(([name, bg]) => (
                  <HeadCell key={name} $bg={bg}>
                    <HeadInner>
                      <CircleMinus />{name}
                      <SortArt fill={bg ? "#fff" : "#c0c4cc"} />
                      <FilterArt fill={bg ? "#fff" : "#c0c4cc"} />
                    </HeadInner>
                  </HeadCell>
                ))}
                <HeadCell><HeadInner $shift={6}><CircleMinus />状态</HeadInner></HeadCell>
              </tr>
            </thead>
            <tbody>
              {rows.map(([id, values, state]) => (
                <tr key={id}>
                  <CheckCell><Check aria-label={"选择 " + id} /></CheckCell>
                  <td>{id}</td>
                  {columns.map(([name], i) => <td key={name}>{values[i]}</td>)}
                  <StateCell $state={state}>{state}</StateCell>
                </tr>
              ))}
            </tbody>
          </Table>
        </DataScroll>
        <Track $top={28} $from={29} $size={25} />
      </Scroller>
    </DataCard>
  );
};

const axes = ["x0", "x1", "y0"];

const App = () => {
  const [active, setActive] = React.useState("计算流程");

  return (
    <Page>
      <GlobalStyle />
      <Gradients />
      <TopBar>
        <LogoMark />
        <BarButton $min={79}>全屏显示</BarButton>
      </TopBar>
      <TabRow>
        <TabList>
          {tabs.map((t) => (
            <Tab key={t} $active={t === active} onClick={() => setActive(t)}>{t}</Tab>
          ))}
        </TabList>
        <FoldButton aria-label="收起">
          <svg width="12" height="8" viewBox="0 0 12 8" fill="none" stroke={blue} strokeWidth="2">
            <path d="M2 6L6 2L10 6" />
          </svg>
        </FoldButton>
      </TabRow>
      <Ribbon>
        {ribbon.map((g, i) => (
          <RibbonGroup key={g.title} $first={i === 0}>
            <RibbonButtons>
              {g.items.map(([icon, label, off]) => (
                <RibbonButton key={label} disabled={off}>
                  <Art name={icon} />
                  {label}
                </RibbonButton>
              ))}
            </RibbonButtons>
            <RibbonTitle>{g.title}</RibbonTitle>
          </RibbonGroup>
        ))}
      </Ribbon>

      <Main>
        <Side>
          <FlowPicker>
            <label htmlFor="flow">计算流程</label>
            <SelectWrap>
              <Select id="flow"><option>流程2</option></Select>
              <svg width="10" height="8" viewBox="0 0 10 8" fill="none" stroke="#a0a4ac">
                <path d="M1 1.500L5 6L9 1.500" />
              </svg>
            </SelectWrap>
            <PlainButton aria-label="新增">
              <svg width="24" height="24" viewBox="0 0 24 24">
                <circle cx="12" cy="12" r="12" fill="url(#gBlue)" />
                <circle cx="12" cy="12" r="11" fill="none" stroke="#1673c8" />
                <path d="M12 4V20M4 12H20" stroke="#fff" strokeWidth="3.500" />
              </svg>
            </PlainButton>
          </FlowPicker>
          <Tree>
            {tree.map(([level, icon, label, open], i) => (
              <TreeRow key={i} $level={level}>
                <Caret $open={open} />
                <TreeArt name={icon} />
                <TreeLabel>{label}</TreeLabel>
              </TreeRow>
            ))}
          </Tree>
          <BlankBlock $w={186} $h={52} />
          <BlankBlock $w={190} $h={128} />
        </Side>

        <Work>
          <Middle>
            <Progress>
              进行中(59%)
              <Badge>运行状态</Badge>
            </Progress>
            <InfoCard>
              <CardTitle>任务信息</CardTitle>
              <PieBox><Pie /></PieBox>
              <InfoList>
                {info.map(([k, v]) => (
                  <React.Fragment key={k}>
                    <dt>{k}</dt>
                    <dd>{v}</dd>
                  </React.Fragment>
                ))}
              </InfoList>
            </InfoCard>
            <BestCard>
              <CardTitle>最优设计</CardTitle>
              <Scroller>
                <BestTable>
                  <colgroup>
                    <col width="60" />
                    <col />
                    <col width="68" />
                  </colgroup>
                  <thead>
                    <tr><th>名称</th><th>值</th><th>改变量</th></tr>
                  </thead>
                  <tbody>
                    {best.map((r) => (
                      <tr key={r[0]}>{r.map((c) => <td key={c}>{c}</td>)}</tr>
                    ))}
                  </tbody>
                </BestTable>
                <Track $top={27} $from={0} $size={71} />
              </Scroller>
            </BestCard>
          </Middle>
          <DataTable />
        </Work>
      </Main>

      <FloatWindow x={1001} y={219} z={2} title="新建相关图" path="绘图-ec78 / problem / opt_task / 运行监控">
        <Matrix>
          <MatrixHead>
            {axes.map((a, i) => (
              <AxisCell key={a}>
                <StepButton disabled={i === 0}>&lt;</StepButton>
                <AxisName>{a}</AxisName>
                <StepButton disabled={i === 2}>&gt;</StepButton>
              </AxisCell>
            ))}
          </MatrixHead>
          <MatrixSide>
            {axes.map((a, i) => (
              <AxisCell key={a} $vertical>
                <StepButton disabled={i === 0}>ʌ</StepButton>
                <AxisName $vertical>{a}</AxisName>
                <StepButton disabled={i === 2}>v</StepButton>
              </AxisCell>
            ))}
          </MatrixSide>
          <MatrixPlot />
        </Matrix>
      </FloatWindow>

      <FloatWindow
        x={666}
        y={462}
        z={3}
        title="新建历程图"
        path="绘图-c708 / problem / opt_task / 运行监控"
        footer={
          <>
            <svg width="12" height="12" viewBox="0 0 12 12">
              <circle cx="6" cy="6" r="6" fill="#c8c8c8" />
              <path d="M6.800 2.200L6.500 3.600M6.200 5L5.300 9.500" stroke="#fff" strokeWidth="1.600" />
            </svg>
            <InfoWord>info</InfoWord>
            准备就绪
          </>
        }
      >
        <HistoryChart />
        <ChartTools>
          {chartTools.map(([label, d, color]) => (
            <PlainButton key={label} aria-label={label}>
              <svg width="17" height="18" viewBox="0 0 60 60" preserveAspectRatio="none" fill="none" stroke={color} strokeWidth="4">
                <path d={d} />
              </svg>
            </PlainButton>
          ))}
        </ChartTools>
      </FloatWindow>

      <Dock>
        <svg width="12" height="12" viewBox="0 0 12 12" fill="none" stroke="#909399">
          <path d="M0 6H9M5 2L9 6L5 10M11 1V11" />
        </svg>
        <DockItem>
          <svg width="12" height="12" viewBox="0 0 12 12" fill="none" stroke="#8a8d93">
            <circle cx="6" cy="6" r="5" />
            <circle cx="6" cy="6" r="2.500" />
            <path d="M2.500 2.500L4 4M9.500 2.500L8 4M2.500 9.500L4 8M9.500 9.500L8 8" />
          </svg>
          绘图-ec78 / problem / opt_task / 运行监控
          <ToolButton $size={16} aria-label="刷新">
            <svg width="9" height="9" viewBox="0 0 24 24"><RefreshArt /></svg>
          </ToolButton>
          <ToolButton $size={16} aria-label="还原窗口"><SquareArt size={8} /></ToolButton>
          <ToolButton $size={16} aria-label="关闭"><XArt size={9} /></ToolButton>
        </DockItem>
      </Dock>

      <BottomBar>
        <BarButton aria-label="设置">
          <svg width="11" height="11" viewBox="0 0 12 12" fill="none" stroke={blue}>
            <circle cx="6" cy="6" r="3" strokeWidth="2" />
            <circle cx="6" cy="6" r="5" strokeWidth="2" strokeDasharray="2 1.930" />
          </svg>
        </BarButton>
        <BarButton>problem / opt_task / 运行监控 ▾</BarButton>
        <BarButton>布局 ▾</BarButton>
        <BarButton $min={78}>隐藏全部</BarButton>
      </BottomBar>
    </Page>
  );
};

export default App;
